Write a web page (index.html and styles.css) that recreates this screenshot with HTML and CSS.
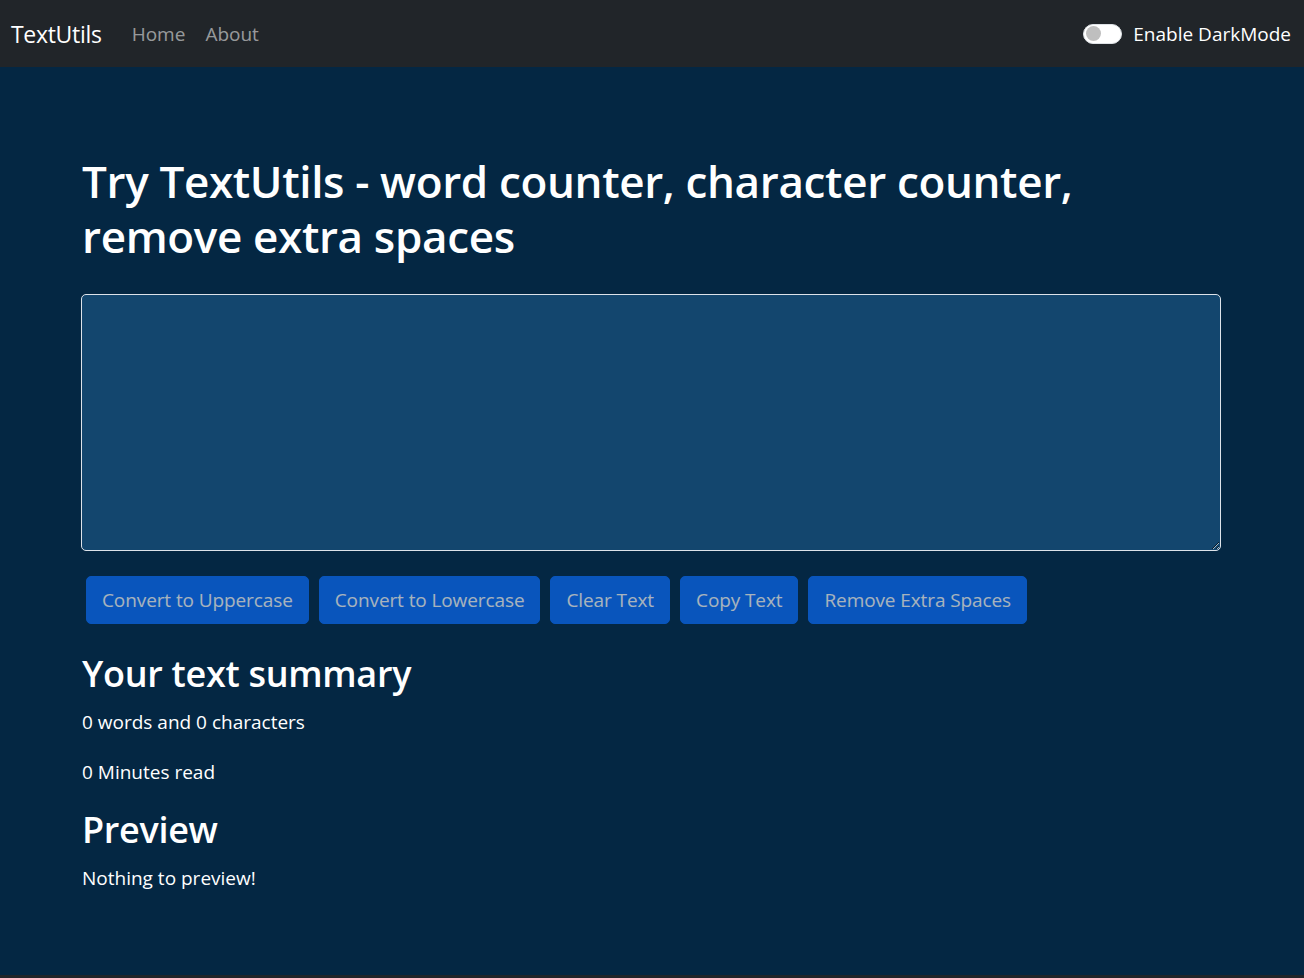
FILE: index.html
```html
<!DOCTYPE html>
<html lang="en">
<head>
<meta charset="utf-8">
<title>TextUtils</title>
<link rel="stylesheet" href="styles.css">
</head>
<body>
<nav class="navbar">
  <div class="nav-left">
    <a class="brand" href="#">TextUtils</a>
    <a class="nav-link" href="#">Home</a>
    <a class="nav-link" href="#">About</a>
  </div>
  <div class="switch">
    <span class="switch-track"><span class="switch-knob"></span></span>
    <label class="switch-label">Enable DarkMode</label>
  </div>
</nav>
<main class="container">
  <h1 class="title">Try TextUtils - word counter, character counter, remove extra spaces</h1>
  <textarea class="textbox" rows="8"></textarea>
  <div class="buttons">
    <button class="btn" disabled>Convert to Uppercase</button>
    <button class="btn" disabled>Convert to Lowercase</button>
    <button class="btn" disabled>Clear Text</button>
    <button class="btn" disabled>Copy Text</button>
    <button class="btn" disabled>Remove Extra Spaces</button>
  </div>
  <section class="summary">
    <h2 class="subtitle">Your text summary</h2>
    <p class="text">0 words and 0 characters</p>
    <p class="text">0 Minutes read</p>
    <h2 class="subtitle">Preview</h2>
    <p class="text">Nothing to preview!</p>
  </section>
</main>
</body>
</html>
```
FILE: styles.css
```css
html {
  background: #212529;
}
body {
  margin: 0;
  min-height: 975px;
  background: #042743;
  color: #fff;
  font-family: "Open Sans", "Noto Sans", sans-serif;
  font-size: 20px;
  line-height: 30px;
}
.navbar {
  height: 67px;
  background: #212529;
  display: flex;
  align-items: center;
  justify-content: space-between;
  padding: 0 13px 0 11px;
}
.nav-left {
  display: flex;
  align-items: center;
}
.brand {
  color: #fff;
  text-decoration: none;
  font-size: 23px;
  letter-spacing: -0.3px;
  margin-right: 20px;
}
.nav-link {
  color: rgba(255, 255, 255, 0.55);
  text-decoration: none;
  font-size: 19px;
  padding: 0 10px;
}
.switch {
  display: flex;
  align-items: center;
  gap: 11px;
}
.switch-track {
  box-sizing: border-box;
  width: 39px;
  height: 20px;
  border-radius: 10px;
  background: #fff;
  border: 1px solid #dee2e6;
  display: flex;
  align-items: center;
  padding: 0 2px;
}
.switch-knob {
  width: 15px;
  height: 15px;
  border-radius: 50%;
  background: #bfbfbf;
}
.switch-label {
  font-size: 19px;
  color: #fff;
}
.container {
  width: 1142px;
  margin: 0 auto;
  padding-top: 87px;
}
.title {
  margin: 0 0 30px 1px;
  font-size: 44px;
  line-height: 55px;
  letter-spacing: -0.35px;
  font-weight: 600;
}
.textbox {
  display: block;
  box-sizing: border-box;
  width: 1140px;
  height: 257px;
  margin: 0 0 20px;
  background: #13466e;
  border: 1px solid #dde3ea;
  border-radius: 5px;
  color: #fff;
  font: inherit;
  padding: 8px 15px;
}
.buttons {
  display: flex;
  flex-wrap: wrap;
}
.btn {
  margin: 5px;
  height: 48px;
  padding: 0 15px;
  background: #0d6efd;
  border: 1px solid #0d6efd;
  border-radius: 5px;
  color: #fff;
  font: inherit;
  font-size: 19px;
  letter-spacing: -0.1px;
  opacity: 0.65;
}
.summary {
  margin-top: 22px;
  padding-left: 1px;
}
.subtitle {
  margin: 0 0 10px;
  font-size: 36px;
  line-height: 46px;
  letter-spacing: -0.3px;
  font-weight: 600;
}
.text {
  margin: 0 0 20px;
  font-size: 19px;
}
```
